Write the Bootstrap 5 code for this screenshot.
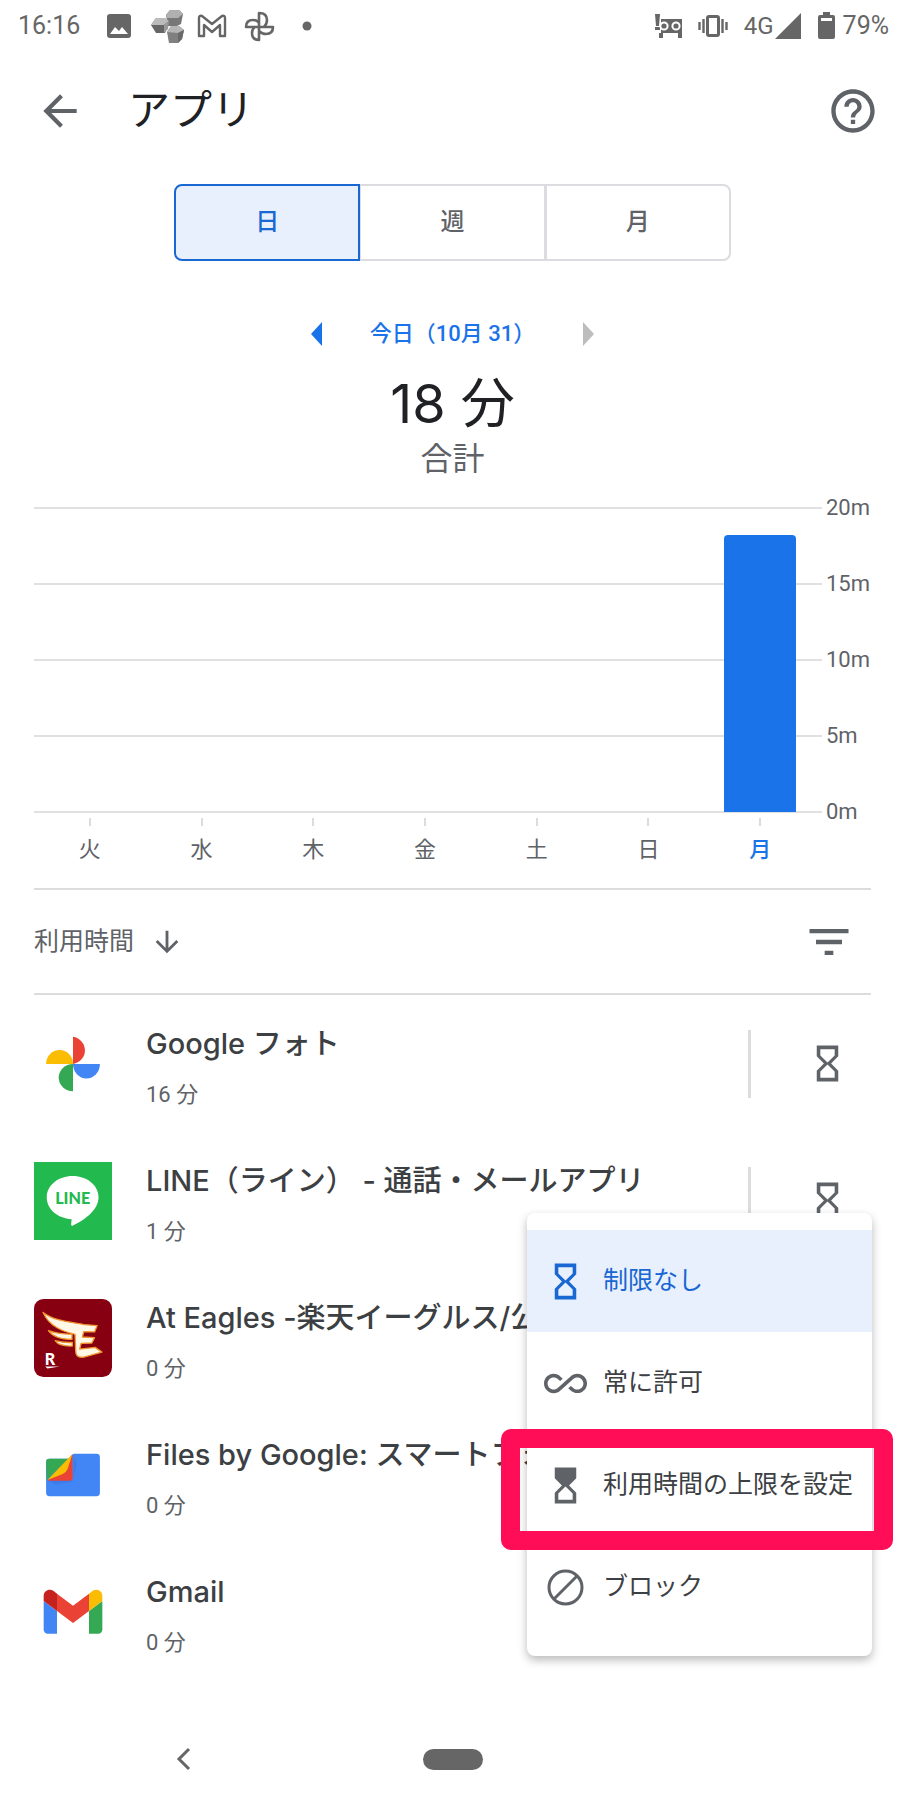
<!DOCTYPE html>
<html lang="ja">
<head>
<meta charset="utf-8">
<meta name="viewport" content="width=device-width, initial-scale=1">
<title>アプリ</title>
<link href="https://cdn.jsdelivr.net/npm/bootstrap@5.3.0/dist/css/bootstrap.min.css" rel="stylesheet">
<style>
  :root { --ink: #202124; --ink-2: #3c4043; --muted: #5f6368; --line: #dadce0; --blue: #1a73e8; --blue-dark: #1967d2; --blue-bg: #e8f0fe; }
  body { font-family: Roboto, "Noto Sans CJK JP", sans-serif; color: var(--ink-2); background: #fff; }
  svg { display: block; flex: none; }
  .display-face { font-family: Inter, "Noto Sans CJK JP", sans-serif; }
  .gutter { padding-left: 34px; padding-right: 34px; }

  .status-bar { height: 52px; padding: 0 16px 0 18px; color: #666; font-size: 25px; line-height: 52px; }
  .status-bar .net { font-size: 24px; }
  .status-icons { gap: 10px; margin-left: 24px; }
  .app-bar { height: 118px; padding: 0 26px 0 35px; }
  .app-bar h1 { font-size: 42px; line-height: 60px; color: var(--ink); margin: 0 0 0 43px; font-weight: 400; }
  .icon-btn { border: 0; background: none; padding: 0; color: var(--muted); }

  .range { width: 61.5%; margin: 14px auto 0; }
  .range .btn { flex: 1 1 0; height: 77px; border: 2px solid var(--line); border-radius: 8px; color: var(--muted); background: #fff; font-size: 24px; line-height: 72px; font-weight: 500; padding: 0; }
  .range .btn-check:checked + .btn { color: var(--blue-dark); border-color: var(--blue-dark); background: var(--blue-bg); z-index: 1; }

  .day-nav { margin-top: 53px; height: 40px; gap: 48px; color: var(--blue); font-size: 22px; line-height: 40px; font-weight: 500; }
  .total-time { padding-top: 6px; font-size: 54px; line-height: 88px; color: var(--ink); }
  .total-label { font-size: 32px; line-height: 22px; color: var(--muted); }

  .chart { display: grid; }
  .chart > * { grid-area: 1 / 1; }
  .scale-row { height: 76px; gap: 4px; font-size: 22px; line-height: 76px; color: var(--muted); }
  .scale-row i { height: 2px; background: #e0e0e0; }
  .scale-row span { width: 45px; }
  .days { padding: 38px 55px 0 0; }
  .day-col { flex: 1 1 0; font-size: 22px; line-height: 34px; color: var(--muted); }
  .bar-area { height: 304px; }
  .bar-fill { width: 72px; background: var(--blue); border-radius: 4px 4px 0 0; }
  .tick { width: 2px; height: 8px; margin: 6px 0 7px; background: var(--line); }
  .day-col.today { color: var(--blue); font-weight: 500; }

  .rule { border: 0; border-top: 2px solid #dcdcdc; opacity: 1; margin: 0; }
  .chart + .rule { margin-top: 21px; }
  .sort-bar { height: 103px; color: var(--muted); font-size: 25px; padding-right: 16px; }
  .app-row { height: 137px; }
  .app-icon { width: 78px; height: 78px; }
  .app-text { margin-left: 34px; padding-top: 6px; min-width: 0; }
  .app-name { font-size: 29px; line-height: 44px; font-weight: 500; }
  .app-time { font-size: 22px; line-height: 32px; margin-top: 13px; color: var(--muted); }
  .split { width: 3px; height: 68px; background: #dcdcdc; }
  .limit-btn { width: 120px; padding-left: 55px; }

  .limit-menu { top: 218px; right: 33px; width: 345px; padding: 17px 0 18px; border: 0; border-radius: 8px; box-shadow: 0 4px 10px rgba(0,0,0,.28); --bs-dropdown-link-active-bg: var(--blue-bg); --bs-dropdown-link-active-color: var(--blue-dark); }
  .limit-menu .dropdown-item { height: 102px; padding: 0 0 0 17px; gap: 16px; font-size: 25px; color: var(--ink-2); }
  .limit-menu .dropdown-item.active { color: var(--blue-dark); }
  .limit-menu svg { color: var(--muted); }
  .limit-menu .active svg { color: var(--blue-dark); }
  .highlight { inset: -5px -21px -14px -26px; border: 19px solid #ff0d57; border-radius: 10px; pointer-events: none; }

  .system-nav { height: 102px; }
  .back-slot { width: 87%; }
  .home-pill { width: 60px; height: 21px; border-radius: 11px; background: #666; border: 0; padding: 0; }
</style>
</head>
<body class="d-flex flex-column min-vh-100">

<svg width="0" height="0" class="position-absolute" aria-hidden="true">
  <symbol id="hourglass" viewBox="0 0 24 24"><path fill="currentColor" d="M6 2v6h.01L6 8.01 10 12l-4 4 .01.01H6V22h12v-5.99h-.01L18 16l-4-4 4-3.99-.01-.01H18V2H6zm10 14.5V20H8v-3.5l4-4 4 4zm-4-5l-4-4V4h8v3.5l-4 4z"/></symbol>
</svg>

<div class="status-bar d-flex align-items-center">
  <span>16:16</span>
  <div class="status-icons d-flex align-items-center">
    <svg width="28" height="28" viewBox="0 0 28 28"><rect x="3" y="2" width="24" height="24" rx="3" fill="#666"/><path d="M6 22l5-7 4 4 3-4 6 7z" fill="#fff"/></svg>
    <svg class="ms-2" width="34" height="34" viewBox="0 0 34 34">
      <path d="M16 6l4-5h9l4 4-2 10-4 2h-9z" fill="#777"/><path d="M16 6l4-5h9l4 4-5 4H17z" fill="#b0b0b0"/>
      <path d="M1 16l5-7h9l4 5-4 10H6z" fill="#666"/><path d="M1 16l5-7h9l4 3-5 4z" fill="#bbb"/><path d="M14 16l5-4-1 8-4 4z" fill="#999"/>
      <path d="M17 23l4-6h8l5 4-2 9-4 4h-9z" fill="#808080"/><path d="M17 23l4-6h8l5 4-6 3z" fill="#b5b5b5"/><path d="M28 24l6-3-2 9-4 4z" fill="#6a6a6a"/>
    </svg>
    <svg width="36" height="28" viewBox="0 0 36 28"><path d="M5 24V6q0-3 3-2l10 8 10-8q3-1 3 2v18h-5V13l-8 7-8-7v11z" fill="none" stroke="#666" stroke-width="2.4" stroke-linejoin="round"/></svg>
    <svg class="ms-1" width="32" height="32" viewBox="0 0 32 32" fill="none" stroke="#666" stroke-width="2.6" stroke-linejoin="round"><path d="M15 17V3q8 0 8 7 0 4-3 7M15 17h14q0 7-7 7-4 0-7-3M15 17v13q-7 0-7-7 0-4 3-6M15 17H2q0-7 7-7 4 0 6 3"/></svg>
    <svg width="40" height="28" viewBox="0 0 40 28"><circle cx="21" cy="14" r="4.500" fill="#666"/></svg>
  </div>
  <svg class="ms-auto" width="28" height="26" viewBox="0 0 28 26"><path d="M1 1h5L5 13H2zM1 14h5v3H1z" fill="#666"/><path d="M7 6h21v19h-4v-5H9v5H5v-5h2z" fill="#666"/><circle cx="10" cy="13" r="3.6" fill="#666" stroke="#fff" stroke-width="2"/><circle cx="22" cy="13" r="3.6" fill="#666" stroke="#fff" stroke-width="2"/></svg>
  <svg class="ms-3" width="30" height="24" viewBox="0 0 30 24" fill="none" stroke="#666"><rect x="9.500" y="2.500" width="11" height="19" rx="1.500" stroke-width="3"/><path d="M1.500 8v8M28.500 8v8" stroke-width="2.400"/><path d="M5.500 5v14M24.500 5v14" stroke-width="2.400"/></svg>
  <span class="net ms-3">4G</span>
  <svg width="28" height="28" viewBox="0 0 28 28"><path d="M27 1v26H1z" fill="#666"/></svg>
  <svg class="ms-3" width="17" height="28" viewBox="0 0 17 28"><path d="M5 0h7v3h3q2 0 2 2v20q0 2-2 2H2q-2 0-2-2V5q0-2 2-2h3z" fill="#666"/><path d="M3 6h11v3H3z" fill="#fff"/></svg>
  <span class="ms-2">79%</span>
</div>

<header class="app-bar d-flex align-items-center">
  <button type="button" class="icon-btn" aria-label="戻る"><svg width="50" height="50" viewBox="0 0 24 24"><path fill="currentColor" d="M20 11H7.830l5.590-5.590L12 4l-8 8 8 8 1.410-1.410L7.830 13H20z"/></svg></button>
  <h1>アプリ</h1>
  <button type="button" class="icon-btn ms-auto" aria-label="ヘルプ"><svg width="52" height="52" viewBox="0 0 24 24"><path fill="currentColor" d="M11 18h2v-2h-2v2zm1-16C6.480 2 2 6.480 2 12s4.480 10 10 10 10-4.480 10-10S17.520 2 12 2zm0 18c-4.410 0-8-3.590-8-8s3.590-8 8-8 8 3.590 8 8-3.590 8-8 8zm0-14c-2.210 0-4 1.790-4 4h2c0-1.100.9-2 2-2s2 .9 2 2c0 2-3 1.750-3 5h2c0-2.250 3-2.500 3-5 0-2.210-1.790-4-4-4z"/></svg></button>
</header>

<main class="flex-grow-1">
  <div class="btn-group range d-flex" role="group" aria-label="期間">
    <input type="radio" class="btn-check" name="range" id="r-day" checked><label class="btn" for="r-day">日</label>
    <input type="radio" class="btn-check" name="range" id="r-week"><label class="btn" for="r-week">週</label>
    <input type="radio" class="btn-check" name="range" id="r-month"><label class="btn" for="r-month">月</label>
  </div>

  <div class="day-nav d-flex justify-content-center align-items-center">
    <button type="button" class="icon-btn" aria-label="前の日"><svg width="12" height="24" viewBox="0 0 12 24"><path d="M12 0v24L1 12z" fill="#1a73e8"/></svg></button>
    <span>今日（10月 31）</span>
    <button type="button" class="icon-btn" aria-label="次の日" disabled><svg width="12" height="24" viewBox="0 0 12 24"><path d="M0 0v24l11-12z" fill="#bdbdbd"/></svg></button>
  </div>
  <div class="total-time display-face text-center">18 分</div>
  <div class="total-label text-center">合計</div>

  <div class="gutter">
    <div class="chart">
      <div>
        <div class="scale-row d-flex align-items-center"><i class="flex-grow-1"></i><span>20m</span></div>
        <div class="scale-row d-flex align-items-center"><i class="flex-grow-1"></i><span>15m</span></div>
        <div class="scale-row d-flex align-items-center"><i class="flex-grow-1"></i><span>10m</span></div>
        <div class="scale-row d-flex align-items-center"><i class="flex-grow-1"></i><span>5m</span></div>
        <div class="scale-row d-flex align-items-center"><i class="flex-grow-1"></i><span>0m</span></div>
      </div>
      <div class="days d-flex">
        <div class="day-col d-flex flex-column align-items-center"><div class="bar-area"></div><div class="tick"></div>火</div>
        <div class="day-col d-flex flex-column align-items-center"><div class="bar-area"></div><div class="tick"></div>水</div>
        <div class="day-col d-flex flex-column align-items-center"><div class="bar-area"></div><div class="tick"></div>木</div>
        <div class="day-col d-flex flex-column align-items-center"><div class="bar-area"></div><div class="tick"></div>金</div>
        <div class="day-col d-flex flex-column align-items-center"><div class="bar-area"></div><div class="tick"></div>土</div>
        <div class="day-col d-flex flex-column align-items-center"><div class="bar-area"></div><div class="tick"></div>日</div>
        <div class="day-col today d-flex flex-column align-items-center"><div class="bar-area d-flex align-items-end"><div class="bar-fill" style="height:91%"></div></div><div class="tick"></div>月</div>
      </div>
    </div>
    <hr class="rule">
    <div class="sort-bar d-flex align-items-center">
      <button type="button" class="icon-btn d-flex align-items-center gap-3">利用時間<svg width="34" height="34" viewBox="0 0 24 24"><path fill="currentColor" d="M20 12l-1.410-1.410L13 16.170V4h-2v12.170l-5.580-5.590L4 12l8 8 8-8z"/></svg></button>
      <button type="button" class="icon-btn ms-auto" aria-label="絞り込み"><svg width="52" height="52" viewBox="0 0 24 24"><path fill="currentColor" d="M10 18h4v-2h-4v2zM3 6v2h18V6H3zm3 7h12v-2H6v2z"/></svg></button>
    </div>
    <hr class="rule">
  </div>

  <div class="position-relative">
    <ul class="list-unstyled mb-0 gutter">
      <li class="app-row d-flex align-items-center">
        <svg class="app-icon" viewBox="0 0 232 232"><path fill="#ea4335" d="M116 35a42 41 0 0 1 0 81z"/><path fill="#fbbc04" d="M36 116a40 42 0 0 1 80 0z"/><path fill="#4285f4" d="M116 116a40 43 0 0 0 80 0z"/><path fill="#34a853" d="M116 116a42 40 0 0 0 0 81z"/></svg>
        <div class="app-text flex-grow-1"><div class="app-name display-face text-nowrap overflow-hidden">Google フォト</div><div class="app-time">16 分</div></div>
        <div class="split"></div><button type="button" class="icon-btn limit-btn" aria-label="利用時間の制限"><svg width="43" height="43"><use href="#hourglass"/></svg></button>
      </li>
      <li class="app-row d-flex align-items-center">
        <svg class="app-icon" viewBox="0 0 232 232"><path fill="#22b94e" d="M0 0h232v232H0z"/><path fill="#fff" d="M115 42c43 0 77 28 77 63 0 36-38 66-76 84-6 3-6-3-5-9l1-10c-42-2-74-29-74-65 0-35 34-63 77-63z"/><text x="115" y="124" text-anchor="middle" font-family="Lato, sans-serif" font-weight="900" font-size="48" fill="#22b94e">LINE</text></svg>
        <div class="app-text flex-grow-1"><div class="app-name display-face text-nowrap overflow-hidden">LINE（ライン） - 通話・メールアプリ</div><div class="app-time">1 分</div></div>
        <div class="split"></div><button type="button" class="icon-btn limit-btn" aria-label="利用時間の制限"><svg width="43" height="43"><use href="#hourglass"/></svg></button>
      </li>
      <li class="app-row d-flex align-items-center">
        <svg class="app-icon" viewBox="0 0 232 232"><rect width="232" height="232" rx="28" fill="#860012"/>
          <g fill="#fff8e6" stroke="#f2952f" stroke-width="4" stroke-linejoin="round"><path d="M27 40c32 25 78 28 122 36l39 3-8 19-32-1-4 16 36 2-8 16-32 1-4 17 46-5 20 14-54 15c-18 2-24-4-24-20l-2-48C84 96 46 82 27 40z"/><path d="M43 94c22 9 46 10 70 11v15c-28 0-56-6-70-26zM63 124c18 5 34 6 51 5v11c-20 1-42-3-51-16z"/></g>
          <text x="32" y="195" font-family="Lato, sans-serif" font-weight="900" font-size="48" fill="#fff">R</text><path d="M33 201h43l-36 6z" fill="#fff"/></svg>
        <div class="app-text flex-grow-1"><div class="app-name display-face text-nowrap overflow-hidden">At Eagles -楽天イーグルス/公</div><div class="app-time">0 分</div></div>
        <div class="split"></div><button type="button" class="icon-btn limit-btn" aria-label="利用時間の制限"><svg width="43" height="43"><use href="#hourglass"/></svg></button>
      </li>
      <li class="app-row d-flex align-items-center">
        <svg class="app-icon" viewBox="0 0 232 232"><path fill="#4285f4" d="M46 68h66V62q0-9 9-9h65q10 0 10 10v106q0 10-10 10H46q-10 0-10-10V78q0-10 10-10z"/><path fill="#3367d6" opacity=".3" d="M42 132h66q10 0 10-12V60l10 24-14 52-50 8z"/><path fill="#34a853" d="M46 68h58l-66 63-2-53q0-10 10-10z"/><path fill="#ea4335" d="M114 54l1 70q0 9-8 9H40z"/><path fill="#fbbc04" d="M114 54L40 131l44-17q12-5 16-16z"/></svg>
        <div class="app-text flex-grow-1"><div class="app-name display-face text-nowrap overflow-hidden">Files by Google: スマートフォ</div><div class="app-time">0 分</div></div>
        <div class="split"></div><button type="button" class="icon-btn limit-btn" aria-label="利用時間の制限"><svg width="43" height="43"><use href="#hourglass"/></svg></button>
      </li>
      <li class="app-row d-flex align-items-center">
        <svg class="app-icon" viewBox="37.500 17 117 117"><path fill="#4285f4" d="M58 108h14V74L52 59v43c0 3.320 2.690 6 6 6"/><path fill="#34a853" d="M120 108h14c3.320 0 6-2.690 6-6V59l-20 15"/><path fill="#fbbc04" d="M120 48v26l20-15v-8c0-7.420-8.470-11.650-14.400-7.200"/><path fill="#ea4335" d="M72 74V48l24 18 24-18v26L96 92"/><path fill="#c5221f" d="M52 51v8l20 15V48l-5.600-4.200c-5.940-4.450-14.400-.22-14.400 7.200"/></svg>
        <div class="app-text flex-grow-1"><div class="app-name display-face text-nowrap overflow-hidden">Gmail</div><div class="app-time">0 分</div></div>
        <div class="split"></div><button type="button" class="icon-btn limit-btn" aria-label="利用時間の制限"><svg width="43" height="43"><use href="#hourglass"/></svg></button>
      </li>
    </ul>

    <ul class="dropdown-menu show limit-menu">
      <li><button type="button" class="dropdown-item active d-flex align-items-center"><svg width="43" height="43"><use href="#hourglass"/></svg>制限なし</button></li>
      <li><button type="button" class="dropdown-item d-flex align-items-center"><svg width="43" height="43" viewBox="0 0 24 24"><path fill="currentColor" d="M18.600 6.620c-1.440 0-2.800.56-3.770 1.530L12 10.660 10.480 12h.01L7.800 14.390c-.64.64-1.490.99-2.400.99-1.870 0-3.390-1.510-3.390-3.380S3.530 8.620 5.400 8.620c.91 0 1.760.35 2.440 1.030l1.130 1 1.510-1.340L9.220 8.200C8.200 7.180 6.840 6.620 5.400 6.620 2.420 6.620 0 9.040 0 12s2.420 5.380 5.400 5.380c1.440 0 2.800-.56 3.770-1.530l2.830-2.500.01.01L13.520 12h-.01l2.690-2.390c.64-.64 1.490-.99 2.400-.99 1.870 0 3.390 1.510 3.390 3.380s-1.520 3.380-3.390 3.380c-.9 0-1.760-.35-2.440-1.030l-1.140-1.010-1.510 1.340 1.270 1.120c1.020 1.010 2.370 1.570 3.820 1.570 2.980 0 5.400-2.410 5.400-5.380s-2.420-5.370-5.400-5.370z"/></svg>常に許可</button></li>
      <li class="position-relative"><button type="button" class="dropdown-item d-flex align-items-center"><svg width="43" height="43" viewBox="0 0 24 24"><path fill="currentColor" d="M6 2l.01 6L10 12l-3.990 4.010L6 22h12v-6l-4-4 4-3.990V2H6zm10 14.500V20H8v-3.500l4-4 4 4z"/></svg>利用時間の上限を設定</button><div class="highlight position-absolute"></div></li>
      <li><button type="button" class="dropdown-item d-flex align-items-center"><svg width="43" height="43" viewBox="0 0 43 43" fill="none" stroke="currentColor" stroke-width="3"><circle cx="21.500" cy="21.500" r="16.500"/><path d="M10 33l23-23"/></svg>ブロック</button></li>
    </ul>
  </div>
</main>

<nav class="system-nav row g-0 align-items-center" aria-label="システム">
  <div class="col"><div class="back-slot d-flex justify-content-center"><button type="button" class="icon-btn" aria-label="戻る"><svg width="16" height="24" viewBox="0 0 16 24"><path d="M13 2L3 12l10 10" fill="none" stroke="#666" stroke-width="3"/></svg></button></div></div>
  <div class="col-auto"><button type="button" class="home-pill d-block" aria-label="ホーム"></button></div>
  <div class="col"></div>
</nav>

<script src="https://cdn.jsdelivr.net/npm/bootstrap@5.3.0/dist/js/bootstrap.bundle.min.js"></script>
</body>
</html>
